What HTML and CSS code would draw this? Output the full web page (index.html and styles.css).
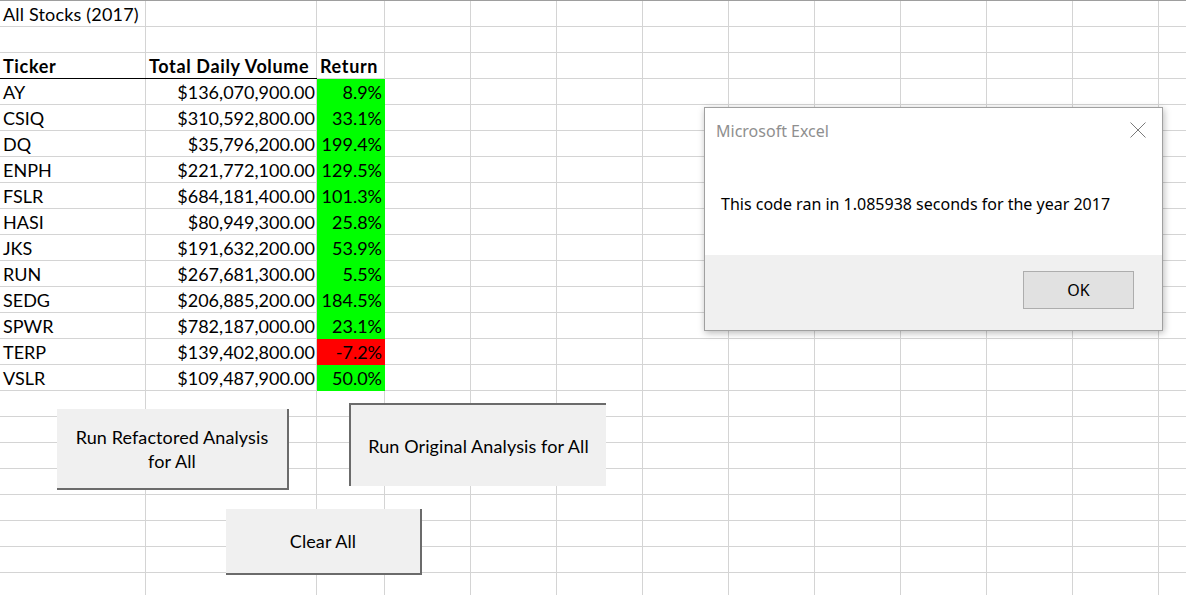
FILE: index.html
```html
<!DOCTYPE html>
<html>
<head>
<meta charset="utf-8">
<title>All Stocks (2017)</title>
<link rel="stylesheet" href="styles.css">
</head>
<body>
<div class="sheet">
  <div class="table">
    <div class="cell title">All Stocks (2017)</div><div class="cell"></div><div class="cell"></div>
    <div class="cell"></div><div class="cell"></div><div class="cell"></div>
    <div class="cell head rule">Ticker</div><div class="cell head rule">Total Daily Volume</div><div class="cell head">Return</div>

    <div class="cell">AY</div><div class="cell num">$136,070,900.00</div><div class="cell ret up">8.9%</div>
    <div class="cell">CSIQ</div><div class="cell num">$310,592,800.00</div><div class="cell ret up">33.1%</div>
    <div class="cell">DQ</div><div class="cell num">$35,796,200.00</div><div class="cell ret up">199.4%</div>
    <div class="cell">ENPH</div><div class="cell num">$221,772,100.00</div><div class="cell ret up">129.5%</div>
    <div class="cell">FSLR</div><div class="cell num">$684,181,400.00</div><div class="cell ret up">101.3%</div>
    <div class="cell">HASI</div><div class="cell num">$80,949,300.00</div><div class="cell ret up">25.8%</div>
    <div class="cell">JKS</div><div class="cell num">$191,632,200.00</div><div class="cell ret up">53.9%</div>
    <div class="cell">RUN</div><div class="cell num">$267,681,300.00</div><div class="cell ret up">5.5%</div>
    <div class="cell">SEDG</div><div class="cell num">$206,885,200.00</div><div class="cell ret up">184.5%</div>
    <div class="cell">SPWR</div><div class="cell num">$782,187,000.00</div><div class="cell ret up">23.1%</div>
    <div class="cell">TERP</div><div class="cell num">$139,402,800.00</div><div class="cell ret down">-7.2%</div>
    <div class="cell">VSLR</div><div class="cell num">$109,487,900.00</div><div class="cell ret up">50.0%</div>
  </div>

  <div class="xbtn btn-refactored"><span>Run Refactored Analysis<br>for All</span></div>
  <div class="xbtn btn-original"><span>Run Original Analysis for All</span></div>
  <div class="xbtn btn-clear"><span>Clear All</span></div>

  <div class="dialog">
    <div class="dlg-body">
      <div class="dlg-head">
        <span class="dlg-title">Microsoft Excel</span>
        <svg class="dlg-close" width="16" height="16" viewBox="0 0 16 16"><path d="M0.5 0.5 L15.5 15.5 M15.5 0.5 L0.5 15.5" stroke="#7a7a7a" stroke-width="1" fill="none"/></svg>
      </div>
      <div class="dlg-msg">This code ran in 1.085938 seconds for the year 2017</div>
    </div>
    <div class="dlg-foot">
      <div class="dlg-ok">OK</div>
    </div>
  </div>
</div>
</body>
</html>
```

FILE: styles.css
```css
html, body {
  margin: 0;
  padding: 0;
  background: #ffffff;
}

.sheet {
  position: relative;
  width: 1186px;
  height: 594px;
  overflow: hidden;
  border-top: 1px solid #9e9e9e;
  background-color: #ffffff;
  background-image:
    linear-gradient(to right, transparent 145px, #d4d4d4 145px, #d4d4d4 146px, transparent 146px),
    linear-gradient(to right, transparent 316px, #d4d4d4 316px, #d4d4d4 317px, transparent 317px),
    linear-gradient(to right, transparent 384px, #d4d4d4 384px, #d4d4d4 385px, transparent 385px),
    repeating-linear-gradient(to right, transparent 0, transparent 85px, #d4d4d4 85px, #d4d4d4 86px),
    repeating-linear-gradient(to bottom, transparent 0, transparent 25px, #d4d4d4 25px, #d4d4d4 26px);
  background-size: 100% 100%, 100% 100%, 100% 100%, 801px 100%, 100% 100%;
  background-position: 0 0, 0 0, 0 0, 385px 0, 0 0;
  background-repeat: no-repeat;
  font-family: "Lato", "Liberation Sans", sans-serif;
  color: #000000;
}

.table {
  display: grid;
  grid-template-columns: 146px 171px 68px;
  grid-auto-rows: 26px;
  width: 385px;
}

.cell {
  box-sizing: border-box;
  height: 26px;
  padding: 2px 2px 0 3px;
  font-size: 18px;
  line-height: 23px;
  white-space: nowrap;
  overflow: visible;
}

.title {
  letter-spacing: 0.18px;
}

.head {
  font-weight: 700;
  letter-spacing: 0.65px;
}

.rule {
  border-bottom: 1px solid #000000;
}

.num {
  text-align: right;
}

.ret {
  text-align: right;
  padding-right: 3px;
}

.up {
  background: #00ff00;
}

.down {
  background: #ff0000;
}

/* Excel form buttons */
.xbtn {
  position: absolute;
  box-sizing: border-box;
  display: flex;
  align-items: center;
  justify-content: center;
  text-align: center;
  background: #f0f0f0;
  font-size: 18px;
  line-height: 24px;
  letter-spacing: 0.1px;
  color: #000000;
}

.btn-refactored {
  left: 57px;
  top: 408px;
  width: 232px;
  height: 81px;
  border-right: 2px solid #6b6b6b;
  border-bottom: 2px solid #6b6b6b;
}

.btn-original {
  left: 349px;
  top: 402px;
  width: 257px;
  height: 83px;
  border-left: 2px solid #6b6b6b;
  border-top: 2px solid #6b6b6b;
}

.btn-clear {
  left: 226px;
  top: 508px;
  width: 196px;
  height: 66px;
  border-right: 2px solid #6b6b6b;
  border-bottom: 2px solid #6b6b6b;
}

/* Message box */
.dialog {
  position: absolute;
  left: 704px;
  top: 106px;
  width: 459px;
  height: 224px;
  box-sizing: border-box;
  border: 1px solid #a0a0a0;
  background: #ffffff;
  box-shadow: 1px 2px 7px rgba(0, 0, 0, 0.28);
  display: flex;
  flex-direction: column;
  font-family: "Noto Sans", "Open Sans", sans-serif;
}

.dlg-body {
  height: 147px;
  display: flex;
  flex-direction: column;
}

.dlg-head {
  display: flex;
  justify-content: space-between;
  align-items: flex-start;
  padding: 12px 16px 0 11px;
}

.dlg-title {
  font-size: 16px;
  line-height: 22px;
  color: #8f8f8f;
}

.dlg-close {
  display: block;
  margin-top: 2px;
}

.dlg-msg {
  margin-top: 51px;
  padding-left: 16px;
  font-size: 16px;
  line-height: 22px;
  color: #000000;
}

.dlg-foot {
  flex: 1;
  background: #f0f0f0;
  display: flex;
  justify-content: flex-end;
  align-items: flex-start;
  padding: 16px 28px 0 0;
}

.dlg-ok {
  box-sizing: border-box;
  width: 111px;
  height: 38px;
  border: 1px solid #adadad;
  background: #e1e1e1;
  display: flex;
  align-items: center;
  justify-content: center;
  font-size: 16px;
  color: #000000;
}
```
